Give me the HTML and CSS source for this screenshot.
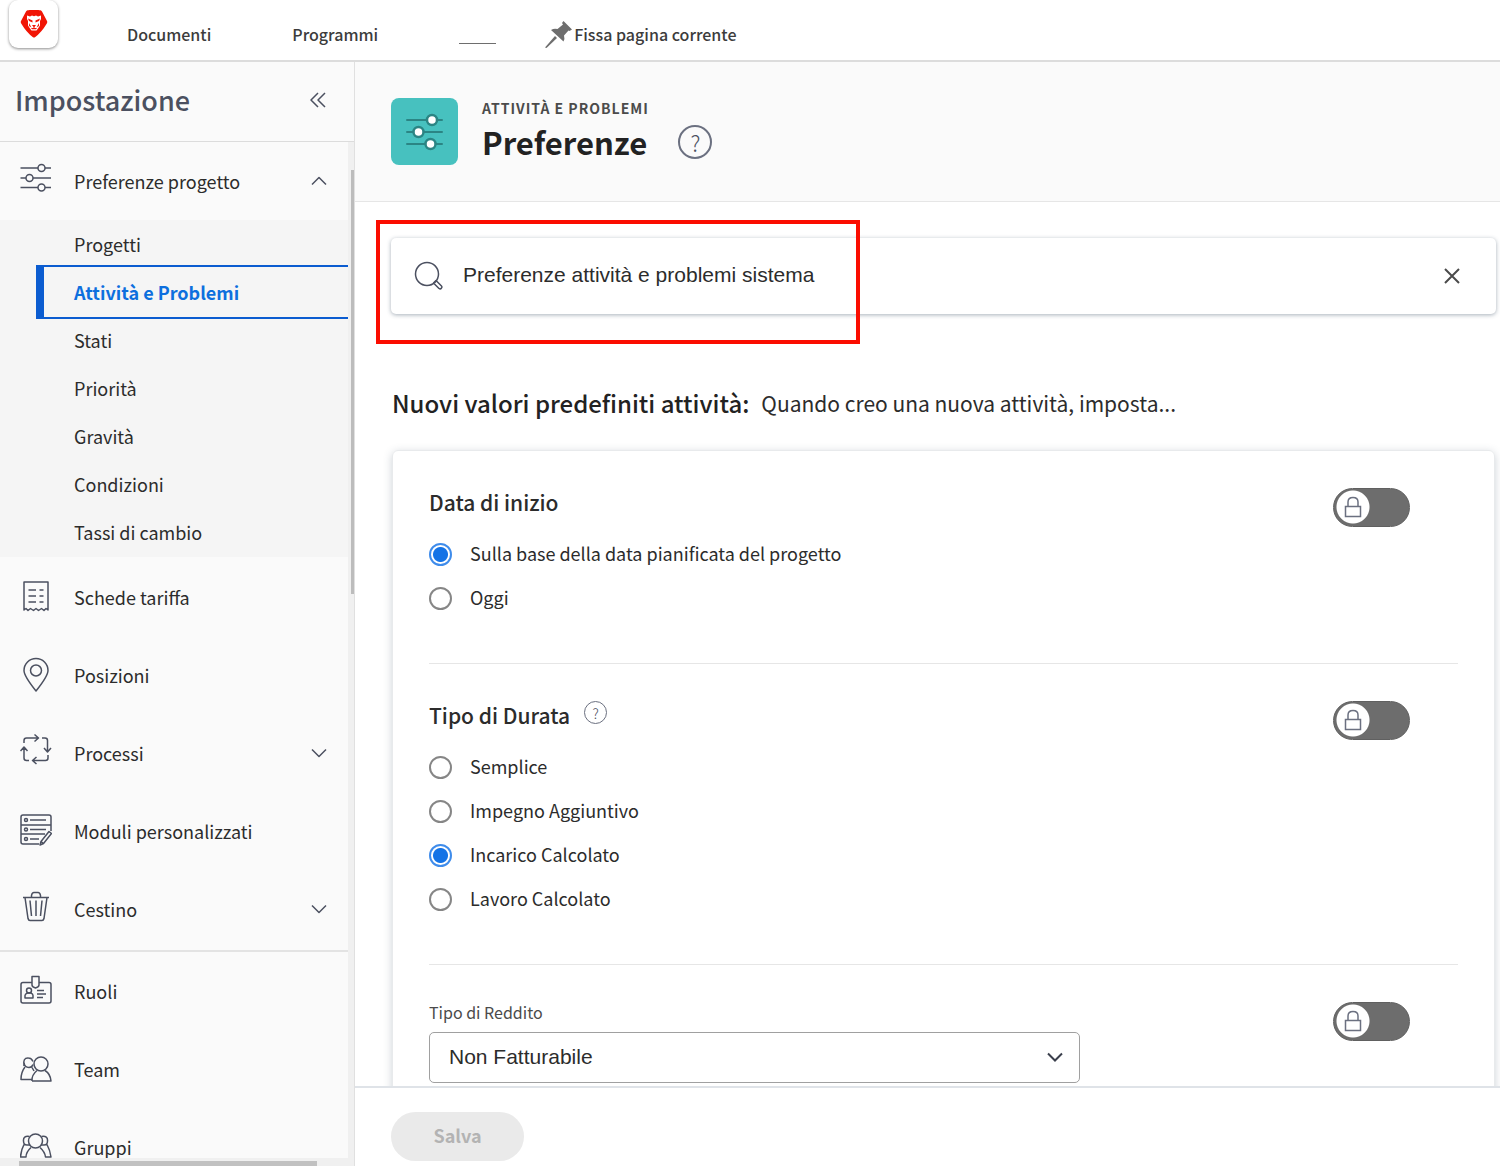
FILE: index.html
```html
<!DOCTYPE html>
<html lang="it">
<head>
<meta charset="utf-8">
<meta name="viewport" content="width=device-width, initial-scale=1">
<title>Preferenze</title>
<link rel="stylesheet" href="styles.css">
</head>
<body>
<header class="topbar">
  <a class="logo" href="#" aria-label="Home">
    <svg width="28" height="28" viewBox="0 0 28 28"><path d="M7.500 0.300Q14 -0.800 20.500 0.300Q21.400 .5 22 1.600L27 11Q27.600 12.300 26.800 13.500Q21.500 22.500 15 27.200Q14 28 13 27.200Q6.500 22.500 1.200 13.500Q.4 12.300 1 11L6 1.600Q6.600 .5 7.500 .3Z" fill="#f11505"/><path d="M7 5.500L10 6.500L12 5.500L14 6.200L16 5.500L18 6.500L21 5.500L21 9L20 11L20 15.500L18 18.500L16.500 20.500H11.500L10 18.500L8 15.500L8 11L7 9Z" fill="#fff"/><path d="M8 8.500L12.500 10.500V12.500L9 11ZM20 8.500L15.500 10.500V12.500L19 11ZM12 15H16L14.500 17V18H17L16 19.300H12L11 18H13.500V17ZM9 13L11.500 17.500L9 16ZM19 13L16.500 17.500L19 16Z" fill="#f11505"/></svg>
  </a>
  <nav class="pins">
    <a href="#">Documenti</a>
    <a href="#">Programmi</a>
    <span class="pin-slot"></span>
    <button class="pin-button" type="button">
      <svg width="27" height="27" viewBox="0 0 27 27"><path d="M18.500 0L27 8.500L24.500 10L23.500 9.500L19 14.500Q20 17.500 18.500 20.500L6 9Q9 7 12.500 8L18 3.500L17 2Z" fill="#6e6e6e"/><path d="M10 15L0 26.500L1.500 27L12 17Z" fill="#6e6e6e"/></svg>Fissa pagina corrente
    </button>
  </nav>
</header>
<div class="layout">
  <aside class="sidebar">
    <div class="side-head">
      <h2>Impostazione</h2>
      <button class="collapse" type="button" aria-label="Comprimi"><svg class="line" width="16" height="16" viewBox="0 0 16 16"><path d="M8 1L1 8L8 15M15 1L8 8L15 15"/></svg></button>
    </div>
    <div class="side-scroll">
      <nav class="menu">
        <a class="item" href="#"><svg class="line icon" viewBox="0 0 32 40"><path d="M.5 7H18M25 7H31M.5 17H6M13 17H31M.5 26.500H18M25 26.500H31"/><circle cx="21.500" cy="7" r="3.500"/><circle cx="9.500" cy="17" r="3.500"/><circle cx="21.500" cy="26.500" r="3.500"/></svg><span>Preferenze progetto</span><svg class="line chev" viewBox="0 0 16 10"><path d="M1 8.500L8 1.500L15 8.500"/></svg></a>
        <div class="submenu">
          <a href="#">Progetti</a>
          <a class="current" href="#">Attività e Problemi</a>
          <a href="#">Stati</a>
          <a href="#">Priorità</a>
          <a href="#">Gravità</a>
          <a href="#">Condizioni</a>
          <a href="#">Tassi di cambio</a>
        </div>
        <div class="group">
          <a class="item" href="#"><svg class="line icon" viewBox="0 0 32 40"><path d="M4 5H28V33L26 31.500L24 33.500L21.500 31.500L18.500 33.500L16 31.500L13.500 33.500L10.500 31.500L8 33.500L6 31.500L4 33Z"/><path d="M8.500 13H16M19.500 13H23.500M8.500 19H16M19.500 19H23.500M8.500 25H16M19.500 25H23.500"/></svg><span>Schede tariffa</span></a>
          <a class="item" href="#"><svg class="line icon" viewBox="0 0 32 40"><path d="M16 36Q4 21 4 15.500A12 12 0 0 1 28 15.500Q28 21 16 36Z"/><circle cx="16" cy="15.500" r="5.500"/></svg><span>Posizioni</span></a>
          <a class="item" href="#"><svg class="line icon" viewBox="0 0 32 40"><path d="M4 10V7.500Q4 5 6.500 5H18M14.500 1.500L18.500 5L14.500 8.500M22 5H25Q27.500 5 27.500 7.500V18.500M24 15L27.500 19L31 15M28 22V25Q28 27.500 25.500 27.500H13M16.500 24L12.500 27.500L16.500 31M9 27.500H6.500Q4 27.500 4 25V14M.5 18L4 14L7.500 18"/></svg><span>Processi</span><svg class="line chev" viewBox="0 0 16 10"><path d="M1 1.500L8 8.500L15 1.500"/></svg></a>
          <a class="item" href="#"><svg class="line icon" viewBox="0 0 32 40"><path d="M19 33H3Q1 33 1 31V6Q1 4 3 4H29Q31 4 31 6V20M1 14H31M1 23H25"/><circle cx="6" cy="9" r="1.500"/><circle cx="6" cy="18.500" r="1.500"/><circle cx="6" cy="28" r="1.500"/><path d="M10 9H26M10 18.500H26M10 28H19M29 20.500L31.500 22.500L23.500 32.500L20 34L21 30.500ZM21 30.500L23.500 32.500"/></svg><span>Moduli personalizzati</span></a>
          <a class="item" href="#"><svg class="line icon" viewBox="0 0 32 40"><path d="M3 8.500H29M5 8.500L8 29.500Q8.500 31.500 10 31.500H22Q23.500 31.500 24 29.500L27 8.500M11.500 8.500V6.500Q12 3.500 14 3.500H18Q20 3.500 20.500 6.500V8.500M10 11.500L11.500 27M16 11.500V27M22 11.500L20.500 27"/></svg><span>Cestino</span><svg class="line chev" viewBox="0 0 16 10"><path d="M1 1.500L8 8.500L15 1.500"/></svg></a>
        </div>
        <div class="group">
          <a class="item" href="#"><svg class="line icon" viewBox="0 0 32 40"><path d="M12 11.500H3Q1 11.500 1 13.500V30Q1 32 3 32H29Q31 32 31 30V13.500Q31 11.500 29 11.500H19M12 5.500H19V14Q19 16 15.500 17Q12 16 12 14ZM5 27V24.500Q5 23 7.500 22H11Q13 23 13 24.500V27ZM17 19.500H24M17 23H26M17 26.500H23"/><circle cx="9" cy="19.500" r="2.500"/></svg><span>Ruoli</span></a>
          <a class="item" href="#"><svg class="line icon" viewBox="0 0 32 40"><circle cx="21" cy="15" r="7"/><path d="M12 32Q11.500 26 17 21.500M25 21.500Q30.500 25 31 32H12M4 17Q2.500 8.500 8.500 9Q11.500 9 13 12.500M4 13.500Q4.500 18.500 9 18.500Q12 18.500 13 15.500M5 18Q1 23 1 30.500H12M12 18.500L14 22"/></svg><span>Team</span></a>
          <a class="item" href="#"><svg class="line icon" viewBox="0 0 32 40"><circle cx="15.500" cy="14" r="7"/><path d="M9.500 9.500Q3 8.500 3.500 14Q3.500 18 7 18H10M21.500 9.500Q28 8.500 27.500 14Q27.500 18 24 18H21M4 17.500Q1 23 .5 30H6Q6 25 11 20.500M27 17.500Q30 23 31 30H25.500Q25 25 20 20.500"/></svg><span>Gruppi</span></a>
        </div>
      </nav>
      <div class="vbar"><i></i></div>
      <div class="hbar"><i></i></div>
    </div>
  </aside>
  <main class="main">
    <header class="page-head">
      <div class="tile"><svg width="37" height="38" viewBox="0 0 37 38"><path d="M1 7H36M1 19H36M1 31H36" stroke="#2b8584" stroke-width="2" stroke-linecap="round"/><g fill="#fff" stroke="#2b8584" stroke-width="2.500"><circle cx="26" cy="7" r="5"/><circle cx="12.500" cy="19" r="5"/><circle cx="24.500" cy="31" r="5"/></g></svg></div>
      <div class="titles">
        <p class="eyebrow">ATTIVITÀ E PROBLEMI</p>
        <div class="title-row"><h1>Preferenze</h1><button class="help big" type="button">?</button></div>
      </div>
    </header>
    <div class="content">
      <div class="search">
        <svg class="line" width="30" height="30" viewBox="0 0 30 30"><circle cx="13" cy="13" r="11.500"/><path d="M19.500 22L22 19.500L27.500 25Q28.500 26 27.500 27Q26.500 28.500 25 27.500Z"/></svg>
        <input type="text" aria-label="Cerca" value="Preferenze attività e problemi sistema">
        <button class="clear" type="button" aria-label="Cancella"><svg width="16" height="16" viewBox="0 0 16 16"><path d="M1 1L15 15M15 1L1 15" stroke="#4b4b4b" stroke-width="2"/></svg></button>
        <div class="highlight"></div>
      </div>
      <div class="lead"><h2>Nuovi valori predefiniti attività:</h2><p>Quando creo una nuova attività, imposta...</p></div>
      <div class="card">
        <section class="pref">
          <div class="pref-body">
            <h3>Data di inizio</h3>
            <label class="radio"><input type="radio" name="start" checked>Sulla base della data pianificata del progetto</label>
            <label class="radio"><input type="radio" name="start">Oggi</label>
          </div>
          <label class="toggle"><input type="checkbox" aria-label="Blocca data di inizio"><svg viewBox="0 0 18 22"><path d="M1.500 10.500H16.500V20.500H1.500ZM4 10.500V6Q4 1.500 9 1.500Q14 1.500 14 6V10.500"/></svg></label>
        </section>
        <section class="pref">
          <div class="pref-body">
            <h3>Tipo di Durata<button class="help" type="button">?</button></h3>
            <label class="radio"><input type="radio" name="duration">Semplice</label>
            <label class="radio"><input type="radio" name="duration">Impegno Aggiuntivo</label>
            <label class="radio"><input type="radio" name="duration" checked>Incarico Calcolato</label>
            <label class="radio"><input type="radio" name="duration">Lavoro Calcolato</label>
          </div>
          <label class="toggle"><input type="checkbox" aria-label="Blocca tipo di durata"><svg viewBox="0 0 18 22"><path d="M1.500 10.500H16.500V20.500H1.500ZM4 10.500V6Q4 1.500 9 1.500Q14 1.500 14 6V10.500"/></svg></label>
        </section>
        <section class="pref">
          <div class="pref-body">
            <label class="field-label" for="revenue">Tipo di Reddito</label>
            <div class="select"><select id="revenue"><option>Non Fatturabile</option></select><svg class="chev" viewBox="0 0 16 10"><path d="M1 1.500L8 8.500L15 1.500"/></svg></div>
          </div>
          <label class="toggle"><input type="checkbox" aria-label="Blocca tipo di reddito"><svg viewBox="0 0 18 22"><path d="M1.500 10.500H16.500V20.500H1.500ZM4 10.500V6Q4 1.500 9 1.500Q14 1.500 14 6V10.500"/></svg></label>
        </section>
      </div>
    </div>
    <footer class="actions"><button class="save" type="button" disabled>Salva</button></footer>
  </main>
</div>
</body>
</html>
```
FILE: styles.css
```css
* { box-sizing: border-box; }
body {
  margin: 0;
  height: 100vh;
  display: flex;
  flex-direction: column;
  overflow: hidden;
  background: #fff;
  color: #2c2c2c;
  font: 18px/30px "Noto Sans CJK SC", "Noto Sans", sans-serif;
}
h1, h2, h3, p { margin: 0; }
a { color: inherit; text-decoration: none; }
button { padding: 0; border: 0; background: none; font: inherit; color: inherit; }
svg { flex: none; display: block; fill: none; }
.line { stroke: #4b5060; stroke-width: 1.5; stroke-linejoin: round; }

.topbar {
  flex: none;
  display: flex;
  align-items: flex-start;
  height: 62px;
  padding-left: 9px;
  border-bottom: 2px solid #dcdcdc;
}
.logo {
  display: flex;
  justify-content: center;
  align-items: center;
  width: 49px;
  height: 48px;
  border-radius: 9px;
  box-shadow: 0 1px 3px rgba(0, 0, 0, .45);
}
.pins {
  display: flex;
  align-items: center;
  height: 68px;
  gap: 81px;
  padding-left: 69px;
  font-size: 16px;
  font-weight: 500;
  color: #3c3c3c;
}
.pin-slot { width: 37px; height: 20px; border-bottom: 1px solid #6e6e6e; }
.pin-button { display: flex; align-items: center; gap: 2px; margin-left: -32px; }

.layout { flex: 1; display: flex; min-height: 0; }
.sidebar {
  flex: none;
  display: flex;
  flex-direction: column;
  width: 355px;
  border-right: 1px solid #e0e0e0;
  background: #fafafa;
}
.side-head {
  flex: none;
  display: flex;
  align-items: center;
  justify-content: space-between;
  height: 80px;
  padding: 0 28px 3px 15px;
  border-bottom: 1px solid #dcdcdc;
}
.side-head h2 { font-size: 27px; font-weight: 500; color: #4b5060; }
.side-scroll { flex: 1; position: relative; min-height: 0; overflow: hidden; }
.menu { margin-right: 6px; }
.item {
  display: flex;
  align-items: center;
  height: 78px;
  padding: 0 21px 0 20px;
}
.item span { flex: 1; margin-left: 22px; }
.icon { width: 32px; height: 40px; }
.chev { width: 16px; height: 10px; }
.submenu { padding: 0 0 1px 36px; background: #f5f5f5; }
.submenu a { display: flex; align-items: center; height: 48px; padding-left: 38px; }
.submenu .current {
  height: 54px;
  margin: -3px 0;
  padding-left: 30px;
  border: solid #0b5cd0;
  border-width: 2px 0 2px 8px;
  color: #0d6fde;
  font-weight: 700;
}
.group { padding: 1px 0 2px; }
.group + .group { border-top: 2px solid #e3e3e3; padding-top: 0; }
.vbar { position: absolute; top: 0; right: 0; bottom: 0; width: 6px; background: #f0f0f0; }
.vbar i { display: block; width: 3px; height: 424px; margin: 28px 0 0 3px; background: #bcbcbc; }
.hbar { position: absolute; left: 0; right: 6px; bottom: 0; height: 8px; padding: 3px 31px 0 19px; background: #f0f0f0; }
.hbar i { display: block; height: 5px; background: #c1c1c1; }

.main { flex: 1; min-width: 0; display: flex; flex-direction: column; }
.page-head {
  flex: none;
  display: flex;
  align-items: center;
  gap: 24px;
  height: 140px;
  padding-left: 36px;
  border-bottom: 1px solid #e6e6e6;
  background: #fafafa;
}
.tile {
  display: flex;
  align-items: center;
  justify-content: center;
  width: 67px;
  height: 67px;
  border-radius: 8px;
  background: #47c1bf;
}
.eyebrow { font-size: 14px; font-weight: 700; line-height: 20px; letter-spacing: 1px; color: #4b4b4b; }
.title-row { display: flex; align-items: center; gap: 31px; height: 48px; }
h1 { font-size: 31px; font-weight: 700; line-height: 48px; color: #222; }
.help {
  width: 23px;
  height: 23px;
  border: 1px solid #6b7080;
  border-radius: 50%;
  font-size: 14px;
  font-weight: 300;
  line-height: 20px;
  color: #4b5060;
  text-align: center;
}
.help.big { width: 34px; height: 34px; border-width: 2px; font-size: 22px; line-height: 28px; }
.content { flex: 1; min-height: 0; overflow: hidden; padding: 36px 4px 0 36px; }
.search {
  position: relative;
  display: flex;
  align-items: center;
  height: 76px;
  padding: 0 36px 0 23px;
  border-radius: 5px;
  box-shadow: 0 1px 4px rgba(60, 80, 100, .45);
}
.search input {
  flex: 1;
  min-width: 0;
  padding: 0 0 2px;
  margin-left: 19px;
  border: 0;
  outline: 0;
  background: none;
  font: 21px/30px "Liberation Sans", Arial, sans-serif;
  color: #2c2c2c;
}
.highlight { position: absolute; left: -15px; top: -18px; width: 484px; height: 124px; border: 4px solid #fb0d00; }
.lead { display: flex; align-items: center; gap: 12px; margin: 74px 0 32px 1px; }
.lead h2 { font-size: 24px; font-weight: 500; line-height: 30px; color: #222; }
.lead p { font-size: 21px; }
.card {
  margin: 0 1px;
  padding: 0 36px;
  border: 1px solid #e8eaec;
  border-radius: 6px;
  box-shadow: 0 2px 8px rgba(60, 80, 100, .25);
}
.pref { display: flex; justify-content: space-between; align-items: flex-start; padding: 37px 48px 43px 0; border-bottom: 1px solid #e6e6e6; }
.pref-body { width: 651px; }
h3 { display: flex; align-items: center; gap: 14px; margin-bottom: 16px; font-size: 21px; font-weight: 500; line-height: 28px; }
h3 .help { align-self: flex-start; }
.radio { display: flex; align-items: center; gap: 18px; height: 44px; padding-bottom: 2px; }
.radio input { appearance: none; width: 23px; height: 23px; margin: 2px 0 0; border: 2px solid #868686; border-radius: 50%; background: #fff; }
.radio input:checked { border-color: #3f8ceb; background: radial-gradient(#1473e6 7px, #fff 8px); }
.toggle { position: relative; display: block; height: 39px; }
.toggle input {
  appearance: none;
  display: block;
  width: 77px;
  height: 39px;
  margin: 0;
  border: 1px solid #606060;
  border-radius: 20px;
  background: radial-gradient(circle at 19px 18px, #fff 16px, #6d6d6d 17px);
}
.toggle svg { position: absolute; left: 11px; top: 8px; width: 18px; height: 22px; stroke: #6b7080; stroke-width: 1.5; }
.field-label { display: block; margin-bottom: 10px; font-size: 16px; line-height: 20px; color: #4b4b4b; }
.select { position: relative; }
.select select {
  appearance: none;
  display: block;
  width: 100%;
  height: 51px;
  padding: 0 19px 2px;
  border: 1px solid #a0a0a0;
  border-radius: 5px;
  background: #fff;
  font: 21px/30px "Liberation Sans", Arial, sans-serif;
  color: #2c2c2c;
}
.select .chev { position: absolute; right: 17px; top: 20px; stroke: #3a3f4c; stroke-width: 2; }
.actions {
  flex: none;
  position: relative;
  height: 80px;
  padding: 24px 36px 0;
  border-top: 2px solid #dfe3e8;
  background: #fff;
}
.save { width: 133px; height: 49px; padding-bottom: 3px; border-radius: 25px; background: #eaeaea; color: #b3b3b3; font-weight: 700; }
```
